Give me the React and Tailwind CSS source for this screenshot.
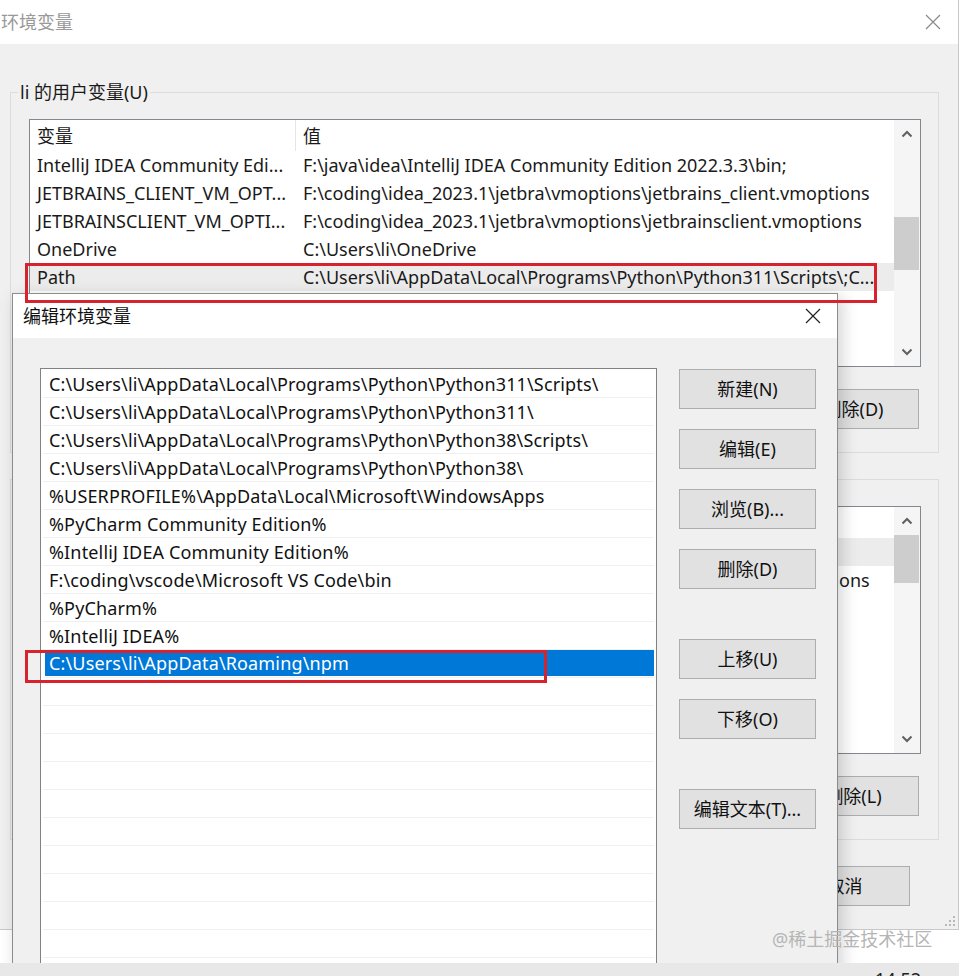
import React from "react";

const userVars = [
  ["IntelliJ IDEA Community Edi...", "F:\\java\\idea\\IntelliJ IDEA Community Edition 2022.3.3\\bin;"],
  ["JETBRAINS_CLIENT_VM_OPT...", "F:\\coding\\idea_2023.1\\jetbra\\vmoptions\\jetbrains_client.vmoptions"],
  ["JETBRAINSCLIENT_VM_OPTI...", "F:\\coding\\idea_2023.1\\jetbra\\vmoptions\\jetbrainsclient.vmoptions"],
  ["OneDrive", "C:\\Users\\li\\OneDrive"],
  ["Path", "C:\\Users\\li\\AppData\\Local\\Programs\\Python\\Python311\\Scripts\\;C..."],
  ["TEMP", "C:\\Users\\li\\AppData\\Local\\Temp"],
];

const sysVars = [
  ["ComSpec", "C:\\Windows\\system32\\cmd.exe"],
  ["JETBRAINS_CLIENT_VM_OPT...", "F:\\coding\\idea_2023.1\\jetbra\\vmoptions\\jetbrains_client.vmoptions"],
  ["NUMBER_OF_PROCESSORS", "16"],
  ["OS", "Windows_NT"],
  ["Path", "C:\\Windows\\system32;C:\\Windows;..."],
  ["PATHEXT", ".COM;.EXE;.BAT;.CMD;.VBS;.VBE;.JS"],
  ["PROCESSOR_ARCHITECTURE", "AMD64"],
];

const pathItems = [
  "C:\\Users\\li\\AppData\\Local\\Programs\\Python\\Python311\\Scripts\\",
  "C:\\Users\\li\\AppData\\Local\\Programs\\Python\\Python311\\",
  "C:\\Users\\li\\AppData\\Local\\Programs\\Python\\Python38\\Scripts\\",
  "C:\\Users\\li\\AppData\\Local\\Programs\\Python\\Python38\\",
  "%USERPROFILE%\\AppData\\Local\\Microsoft\\WindowsApps",
  "%PyCharm Community Edition%",
  "%IntelliJ IDEA Community Edition%",
  "F:\\coding\\vscode\\Microsoft VS Code\\bin",
  "%PyCharm%",
  "%IntelliJ IDEA%",
  "C:\\Users\\li\\AppData\\Roaming\\npm",
];

function CloseIcon({ color }) {
  return (
    <svg width="16" height="16" viewBox="0 0 16 16">
      <path d="M1 1 L15 15 M15 1 L1 15" stroke={color} strokeWidth="1.2" fill="none" />
    </svg>
  );
}

function Chevron({ down }) {
  return (
    <svg width="12" height="8" viewBox="0 0 12 8">
      <path d={down ? "M1.5 1.5 L6 6 L10.5 1.5" : "M1.5 6.5 L6 2 L10.5 6.5"} stroke="#606060" strokeWidth="2" fill="none" />
    </svg>
  );
}

function Scrollbar({ thumbTop, thumbHeight }) {
  return (
    <div className="w-[26px] bg-[#f5f5f5] flex flex-col">
      <div className="h-[28px] flex items-center justify-center">
        <Chevron />
      </div>
      <div className="flex-1">
        <div className="bg-[#cdcdcd] mr-[1px]" style={{ marginTop: thumbTop, height: thumbHeight }} />
      </div>
      <div className="h-[28px] flex items-center justify-center">
        <Chevron down />
      </div>
    </div>
  );
}

function Button({ children, className = "" }) {
  return (
    <div className={"w-[131px] h-[40px] border border-[#adadad] bg-[#e1e1e1] flex items-center justify-center text-[#111] " + className}>
      {children}
    </div>
  );
}

function VarList({ rows, selected, thumbTop, thumbHeight }) {
  return (
    <div className="h-[248px] border border-[#828790] bg-white flex">
      <div className="flex-1 overflow-hidden">
        <div className="h-[31px] flex items-center whitespace-nowrap">
          <div className="w-[266px] h-full pl-[7px] border-r border-[#e5e5e5] flex items-center">变量</div>
          <div className="pl-[7px]">值</div>
        </div>
        {rows.map(([k, v], i) => (
          <div
            key={i}
            className={"h-[28px] flex items-center whitespace-nowrap " + (i === selected ? "bg-[#ececec]" : "")}
          >
            <div className="w-[266px] pl-[7px] overflow-hidden shrink-0">{k}</div>
            <div className="pl-[7px]">{v}</div>
          </div>
        ))}
      </div>
      <Scrollbar thumbTop={thumbTop} thumbHeight={thumbHeight} />
    </div>
  );
}

function GroupBox({ label, children }) {
  return (
    <div className="ml-[10px] w-[929px] border border-[#dcdcdc] pl-[18px] pr-[17px] pb-[23px]">
      <div className="-mt-[13px] -ml-[11px] w-fit px-[2px] h-[24px] leading-[24px] bg-[#f0f0f0]">{label}</div>
      <div className="mt-[15px]">{children}</div>
    </div>
  );
}

function EnvDialog() {
  return (
    <div className="absolute left-0 top-0 w-[959px] h-[930px] bg-[#f0f0f0] border-r border-b border-[#c8c8c8] flex flex-col">
      <div className="h-[44px] bg-white flex items-center justify-between pr-[17px] shrink-0">
        <div className="text-[#999] pl-[1px]">环境变量</div>
        <CloseIcon color="#8a8a8a" />
      </div>
      <div className="mt-[48px]">
        <GroupBox label="li 的用户变量(U)">
          <VarList rows={userVars} selected={4} thumbTop={69} thumbHeight={53} />
          <div className="mt-[22px] mr-[2px] flex justify-end gap-[14px]">
            <Button>新建(N)...</Button>
            <Button>编辑(E)...</Button>
            <Button>删除(D)</Button>
          </div>
        </GroupBox>
      </div>
      <div className="mt-[26px]">
        <GroupBox label="系统变量(S)">
          <VarList rows={sysVars} selected={0} thumbTop={0} thumbHeight={48} />
          <div className="mt-[22px] mr-[2px] flex justify-end gap-[14px]">
            <Button>新建(W)...</Button>
            <Button>编辑(I)...</Button>
            <Button>删除(L)</Button>
          </div>
        </GroupBox>
      </div>
      <div className="mt-[26px] mr-[48px] flex justify-end gap-[14px]">
        <Button>确定</Button>
        <Button>取消</Button>
      </div>
      <div className="flex-1 flex items-end justify-end pr-[3px] pb-[3px]">
        <svg width="10" height="10" viewBox="0 0 10 10">
          <g fill="#b8b8b8">
            <rect x="8" y="0" width="2" height="2" />
            <rect x="4" y="4" width="2" height="2" />
            <rect x="8" y="4" width="2" height="2" />
            <rect x="0" y="8" width="2" height="2" />
            <rect x="4" y="8" width="2" height="2" />
            <rect x="8" y="8" width="2" height="2" />
          </g>
        </svg>
      </div>
    </div>
  );
}

function EditDialog() {
  const empty = Array.from({ length: 12 });
  return (
    <div className="absolute left-[12px] top-[293px] w-[826px] h-[700px] bg-[#f0f0f0] border border-[#8c8c8c] shadow-[4px_4px_16px_rgba(0,0,0,0.18)] flex flex-col">
      <div className="h-[44px] bg-white flex items-center justify-between pl-[10px] pr-[16px] shrink-0">
        <div className="text-[#111]">编辑环境变量</div>
        <CloseIcon color="#222" />
      </div>
      <div className="flex pl-[27px] pt-[30px]">
        <div className="w-[617px] h-[620px] border border-[#828282] bg-white pt-[1px] px-[2px] overflow-hidden tracking-[0.15px]">
          {pathItems.map((p, i) =>
            i === pathItems.length - 1 ? (
              <div key={i} className="h-[28px] border-b border-[#f0f0f0] pl-[2px] pb-[1px]">
                <div className="h-full bg-[#0078d7] text-white pl-[4px] flex items-center whitespace-nowrap">{p}</div>
              </div>
            ) : (
              <div key={i} className="h-[28px] border-b border-[#f0f0f0] pl-[6px] flex items-center whitespace-nowrap text-[#111]">
                {p}
              </div>
            )
          )}
          {empty.map((_, i) => (
            <div key={"e" + i} className="h-[28px] border-b border-[#f0f0f0]" />
          ))}
        </div>
        <div className="ml-[22px] pt-[1px] flex flex-col">
          <Button className="w-[137px]">新建(N)</Button>
          <Button className="w-[137px] mt-[20px]">编辑(E)</Button>
          <Button className="w-[137px] mt-[20px]">浏览(B)...</Button>
          <Button className="w-[137px] mt-[20px]">删除(D)</Button>
          <Button className="w-[137px] mt-[50px]">上移(U)</Button>
          <Button className="w-[137px] mt-[20px]">下移(O)</Button>
          <Button className="w-[137px] mt-[50px]">编辑文本(T)...</Button>
        </div>
      </div>
    </div>
  );
}

export default function App() {
  return (
    <div className="w-[959px] h-[976px] flex flex-col bg-white text-[18px] leading-[24px] text-[#1a1a1a] font-['Noto_Sans','Noto_Sans_CJK_SC',sans-serif] overflow-hidden">
      <div className="relative flex-1 overflow-hidden">
        <EnvDialog />
        <EditDialog />
        {/* red annotation boxes */}
        <div className="absolute left-[25px] top-[263px] w-[852px] h-[40px] border-[3px] border-[#d7232e]" />
        <div className="absolute left-[25px] top-[650px] w-[522px] h-[33px] border-[3px] border-[#d7232e]" />
        <div className="absolute left-[772px] top-[927px] text-[18px] text-[#b5b5b5] whitespace-nowrap">@稀土掘金技术社区</div>
      </div>
      <div className="h-[13px] bg-[#e8e8e8] flex justify-end pr-[38px] shrink-0 overflow-visible">
        <div className="mt-[4px] text-[#222] text-[18px] leading-[24px]">14:52</div>
      </div>
    </div>
  );
}
